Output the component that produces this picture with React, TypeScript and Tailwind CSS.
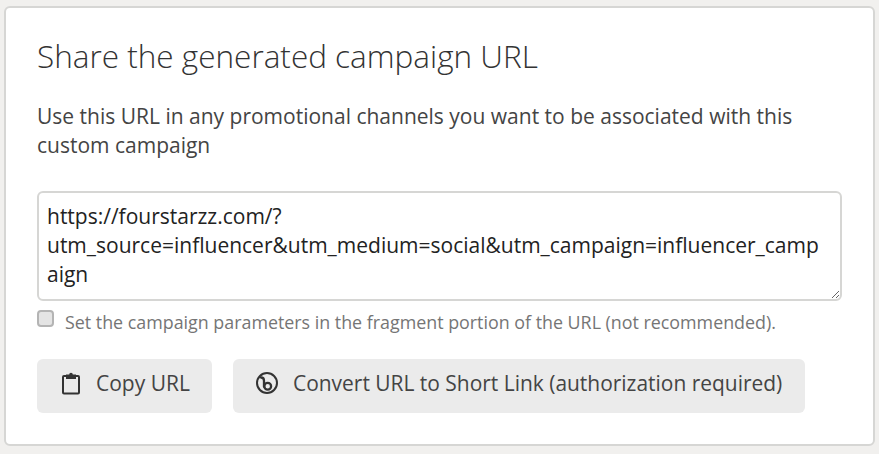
import { useState } from 'react';

const campaignUrl = 'https://fourstarzz.com/?utm_source=influencer&utm_medium=social&utm_campaign=influencer_campaign';

function ClipboardIcon() {
  return (
    <svg width="20" height="24" viewBox="0 0 20 24" fill="none" className="shrink-0">
      <path d="M5 4H3a1 1 0 0 0-1 1v15.500a1 1 0 0 0 1 1h14a1 1 0 0 0 1-1V5a1 1 0 0 0-1-1h-2" stroke="#333" strokeWidth="2" />
      <path d="M5 7V2.500h3.200a1.800 1.800 0 0 1 3.600 0H15V7z" fill="#333" />
    </svg>
  );
}

function BitlyIcon() {
  return (
    <svg width="22" height="24" viewBox="0 0 22 24" fill="none" className="shrink-0">
      <circle cx="11" cy="11" r="10" stroke="#333" strokeWidth="2" />
      <path d="M5 5.500c2.200 0 3 1.200 3 3.200v6" stroke="#333" strokeWidth="2.300" strokeLinecap="round" />
      <circle cx="11.700" cy="14.300" r="3.400" stroke="#333" strokeWidth="2.300" />
    </svg>
  );
}

export default function App() {
  const [fragment, setFragment] = useState(false);

  return (
    <div className="h-[454px] w-[879px] overflow-hidden bg-[#f1f0ee] px-1 pt-1.5 font-['Open_Sans',sans-serif]">
      <div className="h-[440px] w-[871px] rounded-[6px] border-2 border-[#d6d6d4] bg-white px-[31px] pt-[27px]">
        <h2 className="text-[31.5px] font-light leading-[42px] text-[#333]">Share the generated campaign URL</h2>
        <p className="mt-[25px] w-[790px] text-[21px] leading-[29px] text-[#444]">
          Use this URL in any promotional channels you want to be associated with this custom campaign
        </p>
        <textarea
          readOnly
          value={campaignUrl}
          className="mt-[31px] block h-[110px] w-[805px] rounded-[6px] border-2 border-[#d6d6d4] bg-white pb-[9px] pl-2 pr-[17px] pt-[9px] text-[21px] leading-[29px] text-[#222] outline-none"
        />
        <label className="mt-[9px] flex items-center gap-[11px] text-[17.850px] leading-6 text-[#757575]">
          <input
            type="checkbox"
            checked={fragment}
            onChange={(e) => setFragment(e.target.checked)}
            className="mb-[7px] size-[17px] appearance-none rounded-[4px] border-2 border-[#b4b4b4] bg-[#e4e4e4]"
          />
          Set the campaign parameters in the fragment portion of the URL (not recommended).
        </label>
        <div className="mt-[25px] flex gap-[21px]">
          <button className="flex h-[54px] w-[175px] items-center gap-[15px] rounded-[6px] bg-[#ebebeb] pb-[4px] pl-6 text-[21px] text-[#444]">
            <ClipboardIcon />
            Copy URL
          </button>
          <button className="flex h-[54px] w-[572px] items-center gap-[15px] rounded-[6px] bg-[#ebebeb] pb-[4px] pl-[23px] text-[20.950px] text-[#444]">
            <BitlyIcon />
            Convert URL to Short Link (authorization required)
          </button>
        </div>
      </div>
    </div>
  );
}
